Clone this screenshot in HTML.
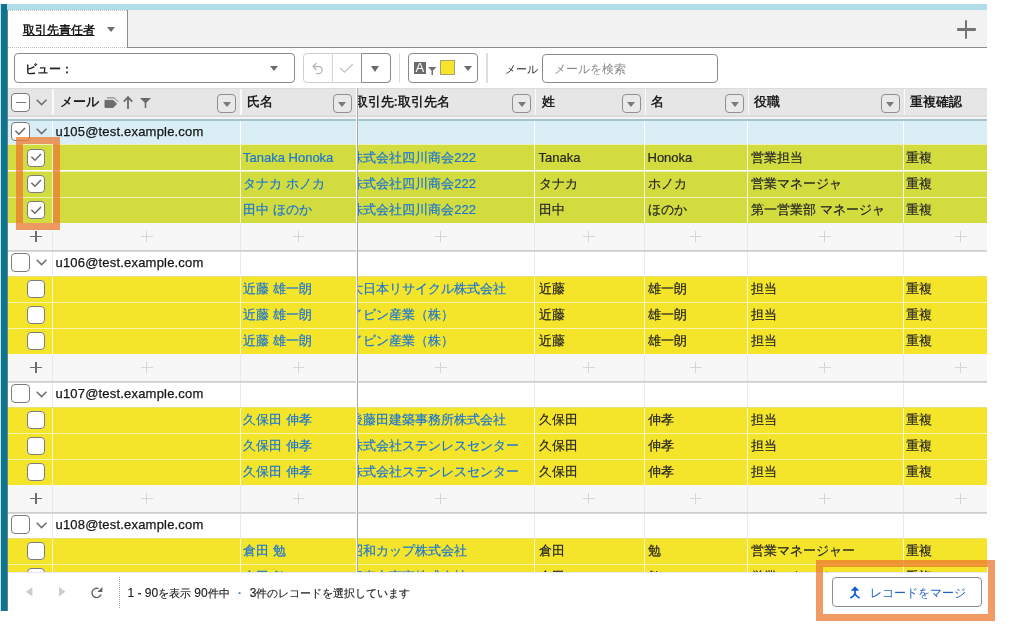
<!DOCTYPE html>
<html><head><meta charset="utf-8"><style>
*{box-sizing:border-box}
html,body{margin:0;padding:0}
body{width:1024px;height:637px;position:relative;overflow:hidden;background:#fff;will-change:transform;font-family:"Liberation Sans",sans-serif;color:#222}
.abs{position:absolute}
.teal{position:absolute;left:1px;top:4px;width:6px;height:607px;background:#0e7590}
.topbar{position:absolute;left:7px;top:4px;width:980px;height:6px;background:#b1dde9}
.tabbar{position:absolute;left:127px;top:10px;width:860px;height:38px;background:#f2f2f2;border-left:1px solid #8c8c8c;border-bottom:1.5px solid #8c8c8c}
.tab{position:absolute;left:8px;top:10px;width:119px;height:38px;background:#fff;border-top:1px dotted #c0c0c0;border-bottom:1px dotted #c0c0c0}
.tablabel{position:absolute;left:14.5px;top:12px;font-size:12px;font-weight:bold;text-decoration:underline;color:#1a1a1a;line-height:14px}
.tri{position:absolute;width:0;height:0;border-left:4px solid transparent;border-right:4px solid transparent;border-top:5px solid #6d6d6d}
.box{position:absolute;border:1px solid #8a8a8a;border-radius:4px;background:#fff}
.grid{position:absolute;left:8px;top:88px;width:979px;height:483.8px;overflow:hidden}
.gin{position:absolute;left:-8px;top:-88px;width:1024px;height:637px}
.hdr{position:absolute;left:8px;top:87.5px;width:979px;height:28px;background:#e6e6e6;border-top:1px solid #dcdcdc}
.htext{position:absolute;top:5.5px;font-size:13px;font-weight:bold;color:#1e1e1e;line-height:15px;white-space:nowrap}
.hsep{position:absolute;top:0;width:1.5px;height:28px;background:#fafafa}
.dd{position:absolute;top:5.5px;width:19px;height:19px;border:1.3px solid #8f8f8f;border-radius:4px;background:#e9e9e9}
.dd .tri{left:4.5px;top:6.5px;border-top-color:#7a7a7a}
.hl{position:absolute;left:8px;width:979px}
.vs{position:absolute;width:1px}
.c{position:absolute;font-size:13px;line-height:15px;white-space:nowrap;color:#262626;-webkit-text-stroke:0.2px currentColor}
.link{color:#1c76d4}
.c3{position:absolute;left:358px;width:176px;overflow:hidden}
.cb{position:absolute;width:19px;height:19px;border:1.2px solid #7d7d7d;border-radius:4px;background:#fff}
.cb svg{position:absolute;left:-1.2px;top:-1.2px}
.chev{position:absolute;width:12px;height:7px;line-height:0}
.gmail{position:absolute;left:55.5px;font-size:13px;letter-spacing:0.19px;line-height:15px;color:#161616;white-space:nowrap;-webkit-text-stroke:0.25px #161616}
.pl{position:absolute;width:11.5px;height:11.5px}
.pl:before{content:"";position:absolute;left:0;top:5px;width:11.5px;height:1.3px;background:#d6d6d6}
.pl:after{content:"";position:absolute;left:5px;top:0;width:1.3px;height:11.5px;background:#d6d6d6}
.pl.dark:before,.pl.dark:after{background:#6e6e6e}
.pl.dark:before{height:1.6px}
.pl.dark:after{width:1.6px}
.orange{position:absolute;border:7px solid rgba(236,122,48,.75)}
.foot{position:absolute;font-size:11px;color:#222;-webkit-text-stroke:0.15px #222;white-space:nowrap;line-height:13px}
</style></head><body>
<div class="teal"></div><div class="abs" style="left:0;top:4px;width:1px;height:607px;background:#c3e2ea"></div><div class="abs" style="left:7px;top:10px;width:1px;height:601px;background:#6b7f85"></div>
<div class="topbar"></div>
<div class="tabbar"></div>
<div class="tab"><div class="tablabel">取引先責任者</div><div class="tri" style="left:99px;top:16px"></div></div>
<div class="abs" style="left:956.5px;top:28.2px;width:19.5px;height:2.7px;background:#747474;border-radius:1px"></div>
<div class="abs" style="left:964.8px;top:20px;width:2.7px;height:19px;background:#747474;border-radius:1px"></div>

<div class="box" style="left:14px;top:53px;width:281px;height:30px"><div class="abs" style="left:9.5px;top:7.5px;font-size:12px;font-weight:bold;line-height:14px">ビュー：</div><div class="tri" style="left:255px;top:12px"></div></div>
<div class="box" style="left:303px;top:53px;width:88px;height:30px;border-color:#cfcfcf"></div>
<div class="abs" style="left:332px;top:53px;width:1px;height:30px;background:#d4d4d4"></div>
<div class="abs" style="left:361px;top:53px;width:30px;height:30px;border:1px solid #8a8a8a;border-radius:0 4px 4px 0"></div>
<div class="tri" style="left:370.8px;top:65.5px;border-left-width:4.7px;border-right-width:4.7px;border-top-width:6px;border-top-color:#6a6a6a"></div>
<svg class="abs" style="left:310px;top:61px" width="15" height="15" viewBox="0 0 15 15"><path d="M4 5.5 H8.5 A3.6 3.6 0 0 1 8.5 12.7 H6" fill="none" stroke="#b9b9b9" stroke-width="1.3"/><path d="M6.5 2 L3 5.5 L6.5 9" fill="none" stroke="#b9b9b9" stroke-width="1.3"/></svg>
<svg class="abs" style="left:339px;top:62px" width="15" height="12" viewBox="0 0 15 12"><path d="M1 6 L5.5 10.2 L13.7 2.3" fill="none" stroke="#c4c4c4" stroke-width="1.3"/></svg>
<div class="abs" style="left:398.5px;top:53px;width:1.5px;height:30px;background:#dedede"></div>
<div class="box" style="left:408px;top:53px;width:70px;height:30px"></div>
<div class="abs" style="left:413.5px;top:61.5px;width:12.5px;height:12px;background:#6b6b6b"></div>
<div class="abs" style="left:413.5px;top:60px;width:12.5px;font-size:13px;color:#fff;text-align:center;line-height:15px">A</div>
<svg class="abs" style="left:428px;top:67px" width="9" height="8" viewBox="0 0 9 8"><path d="M0 0 H8.5 L5 3.5 V8 H3.5 V3.5 Z" fill="#707070"/></svg>
<div class="abs" style="left:440px;top:60px;width:15px;height:15px;background:#f6e52c;border:1px solid #a8a070"></div>
<div class="tri" style="left:464px;top:65.5px"></div>
<div class="abs" style="left:486px;top:53px;width:1.5px;height:30px;background:#dedede"></div>
<div class="abs" style="left:504.5px;top:62px;font-size:11px;color:#333;line-height:14px">メール</div>
<div class="box" style="left:541.5px;top:53.5px;width:176px;height:29.5px"><div class="abs" style="left:11.5px;top:7px;font-size:12px;color:#8a8a8a;line-height:14px">メールを検索</div></div>

<div class="grid"><div class="gin">
<div class="hdr">
  <div class="cb" style="left:3.3px;top:4.3px;background:#fff"><div class="abs" style="left:3.5px;top:7.8px;width:10.3px;height:1.4px;background:#777"></div></div>
  <div class="chev" style="left:28px;top:10.5px"><svg width="12" height="7" viewBox="0 0 12 7"><path d="M0.7 0.7 L5.6 5.6 L10.5 0.7" fill="none" stroke="#6e6e6e" stroke-width="1.5"/></svg></div>
  <div class="hsep" style="left:44.3px"></div>
  <div class="htext" style="left:51.5px">メール</div>
  <svg class="abs" style="left:96px;top:8px" width="15" height="12" viewBox="0 0 15 12"><path d="M1 3.4 H9.2 L12.5 6.9 L9.2 10.4 H1 Z" fill="#6c6c6c" stroke="#6c6c6c" stroke-width="1" stroke-linejoin="round"/><path d="M3 0.9 H10.3 L14.3 5" fill="none" stroke="#777" stroke-width="1"/></svg>
  <svg class="abs" style="left:115px;top:7.5px" width="10" height="13" viewBox="0 0 10 13"><path d="M5 13 V1.5 M0.8 5.6 L5 1.2 L9.2 5.6" fill="none" stroke="#6a6a6a" stroke-width="1.8"/></svg>
  <svg class="abs" style="left:131.5px;top:9.5px" width="11" height="10" viewBox="0 0 11 10"><path d="M0 0 H11 L6.3 4.8 V10 H4.7 V4.8 Z" fill="#6a6a6a"/></svg>
  <div class="dd" style="left:209px"><div class="tri"></div></div>
  <div class="hsep" style="left:232px"></div>
  <div class="htext" style="left:239px">氏名</div>
  <div class="dd" style="left:324.5px"><div class="tri"></div></div>
  <div class="abs" style="left:350px;top:0;width:176px;height:28px;overflow:hidden"><div class="htext" style="left:-3.5px">取引先:取引先名</div></div>
  <div class="dd" style="left:504px"><div class="tri"></div></div>
  <div class="hsep" style="left:526.5px"></div>
  <div class="htext" style="left:533.5px">姓</div>
  <div class="dd" style="left:613.5px"><div class="tri"></div></div>
  <div class="hsep" style="left:636.5px"></div>
  <div class="htext" style="left:643px">名</div>
  <div class="dd" style="left:717px"><div class="tri"></div></div>
  <div class="hsep" style="left:739.5px"></div>
  <div class="htext" style="left:746px">役職</div>
  <div class="dd" style="left:872.5px"><div class="tri"></div></div>
  <div class="hsep" style="left:895.5px"></div>
  <div class="htext" style="left:902px">重複確認</div>
</div>
<div class="hl" style="top:115px;height:2px;background:#dcdcdc"></div>
<div class="hl" style="top:117px;height:2px;background:#f4f4f4"></div>
<div class="hl" style="top:118.80px;height:2px;background:#a5c4cd"></div>
<div class="hl" style="top:120.80px;height:23.60px;background:#d9eef5"></div>
<div class="vs" style="left:52px;top:120.80px;height:23.60px;background:#ffffff"></div>
<div class="vs" style="left:240px;top:120.80px;height:23.60px;background:#ffffff"></div>
<div class="vs" style="left:534px;top:120.80px;height:23.60px;background:#ffffff"></div>
<div class="vs" style="left:644px;top:120.80px;height:23.60px;background:#ffffff"></div>
<div class="vs" style="left:747px;top:120.80px;height:23.60px;background:#ffffff"></div>
<div class="vs" style="left:903px;top:120.80px;height:23.60px;background:#ffffff"></div>
<div class="cb" style="left:11.3px;top:122.10px"><svg width="19" height="19" viewBox="0 0 19 19"><path d="M4.4 8.8 L7.9 12.2 L14 6" fill="none" stroke="#686868" stroke-width="1.5"/></svg></div>
<div class="chev" style="left:36px;top:128.30px"><svg width="12" height="7" viewBox="0 0 12 7"><path d="M0.7 0.7 L5.6 5.6 L10.5 0.7" fill="none" stroke="#6e6e6e" stroke-width="1.5"/></svg></div>
<div class="gmail" style="top:124.00px">u105@test.example.com</div>
<div class="hl" style="top:144.40px;height:1px;background:#eef1b5"></div>
<div class="hl" style="top:145.40px;height:25.00px;background:#d3dc3e"></div>
<div class="vs" style="left:52px;top:145.40px;height:25.00px;background:rgba(255,255,255,.8)"></div>
<div class="vs" style="left:240px;top:145.40px;height:25.00px;background:rgba(255,255,255,.8)"></div>
<div class="vs" style="left:534px;top:145.40px;height:25.00px;background:rgba(255,255,255,.8)"></div>
<div class="vs" style="left:644px;top:145.40px;height:25.00px;background:rgba(255,255,255,.8)"></div>
<div class="vs" style="left:747px;top:145.40px;height:25.00px;background:rgba(255,255,255,.8)"></div>
<div class="vs" style="left:903px;top:145.40px;height:25.00px;background:rgba(255,255,255,.8)"></div>
<div class="cb" style="left:26.7px;top:148.50px;width:18px;height:18px"><svg width="19" height="19" viewBox="0 0 19 19"><path d="M4.4 8.8 L7.9 12.2 L14 6" fill="none" stroke="#686868" stroke-width="1.5"/></svg></div>
<div class="c link" style="left:243px;top:149.90px">Tanaka Honoka</div>
<div class="c3" style="top:145.40px;height:25.00px"><div class="c link" style="left:-7.7px;top:4.5px">株式会社四川商会222</div></div>
<div class="c" style="left:538.5px;top:149.90px">Tanaka</div>
<div class="c" style="left:647.5px;top:149.90px">Honoka</div>
<div class="c" style="left:751px;top:149.90px">営業担当</div>
<div class="c" style="left:906px;top:149.90px">重複</div>
<div class="hl" style="top:170.50px;height:1px;background:#eef1b5"></div>
<div class="hl" style="top:171.50px;height:25.00px;background:#d3dc3e"></div>
<div class="vs" style="left:52px;top:171.50px;height:25.00px;background:rgba(255,255,255,.8)"></div>
<div class="vs" style="left:240px;top:171.50px;height:25.00px;background:rgba(255,255,255,.8)"></div>
<div class="vs" style="left:534px;top:171.50px;height:25.00px;background:rgba(255,255,255,.8)"></div>
<div class="vs" style="left:644px;top:171.50px;height:25.00px;background:rgba(255,255,255,.8)"></div>
<div class="vs" style="left:747px;top:171.50px;height:25.00px;background:rgba(255,255,255,.8)"></div>
<div class="vs" style="left:903px;top:171.50px;height:25.00px;background:rgba(255,255,255,.8)"></div>
<div class="cb" style="left:26.7px;top:174.60px;width:18px;height:18px"><svg width="19" height="19" viewBox="0 0 19 19"><path d="M4.4 8.8 L7.9 12.2 L14 6" fill="none" stroke="#686868" stroke-width="1.5"/></svg></div>
<div class="c link" style="left:243px;top:176.00px">タナカ ホノカ</div>
<div class="c3" style="top:171.50px;height:25.00px"><div class="c link" style="left:-7.7px;top:4.5px">株式会社四川商会222</div></div>
<div class="c" style="left:538.5px;top:176.00px">タナカ</div>
<div class="c" style="left:647.5px;top:176.00px">ホノカ</div>
<div class="c" style="left:751px;top:176.00px">営業マネージャ</div>
<div class="c" style="left:906px;top:176.00px">重複</div>
<div class="hl" style="top:196.60px;height:1px;background:#eef1b5"></div>
<div class="hl" style="top:197.60px;height:25.00px;background:#d3dc3e"></div>
<div class="vs" style="left:52px;top:197.60px;height:25.00px;background:rgba(255,255,255,.8)"></div>
<div class="vs" style="left:240px;top:197.60px;height:25.00px;background:rgba(255,255,255,.8)"></div>
<div class="vs" style="left:534px;top:197.60px;height:25.00px;background:rgba(255,255,255,.8)"></div>
<div class="vs" style="left:644px;top:197.60px;height:25.00px;background:rgba(255,255,255,.8)"></div>
<div class="vs" style="left:747px;top:197.60px;height:25.00px;background:rgba(255,255,255,.8)"></div>
<div class="vs" style="left:903px;top:197.60px;height:25.00px;background:rgba(255,255,255,.8)"></div>
<div class="cb" style="left:26.7px;top:200.70px;width:18px;height:18px"><svg width="19" height="19" viewBox="0 0 19 19"><path d="M4.4 8.8 L7.9 12.2 L14 6" fill="none" stroke="#686868" stroke-width="1.5"/></svg></div>
<div class="c link" style="left:243px;top:202.10px">田中 ほのか</div>
<div class="c3" style="top:197.60px;height:25.00px"><div class="c link" style="left:-7.7px;top:4.5px">株式会社四川商会222</div></div>
<div class="c" style="left:538.5px;top:202.10px">田中</div>
<div class="c" style="left:647.5px;top:202.10px">ほのか</div>
<div class="c" style="left:751px;top:202.10px">第一営業部 マネージャ</div>
<div class="c" style="left:906px;top:202.10px">重複</div>
<div class="hl" style="top:222.70px;height:27.20px;background:#f7f7f7"></div>
<div class="vs" style="left:52px;top:222.70px;height:27.20px;background:#e9e9e9"></div>
<div class="vs" style="left:240px;top:222.70px;height:27.20px;background:#e9e9e9"></div>
<div class="vs" style="left:534px;top:222.70px;height:27.20px;background:#e9e9e9"></div>
<div class="vs" style="left:644px;top:222.70px;height:27.20px;background:#e9e9e9"></div>
<div class="vs" style="left:747px;top:222.70px;height:27.20px;background:#e9e9e9"></div>
<div class="vs" style="left:903px;top:222.70px;height:27.20px;background:#e9e9e9"></div>
<div class="pl dark" style="left:30.2px;top:230.70px"></div>
<div class="pl" style="left:141px;top:230.70px"></div>
<div class="pl" style="left:292.5px;top:230.70px"></div>
<div class="pl" style="left:435px;top:230.70px"></div>
<div class="pl" style="left:583px;top:230.70px"></div>
<div class="pl" style="left:690px;top:230.70px"></div>
<div class="pl" style="left:819px;top:230.70px"></div>
<div class="pl" style="left:955px;top:230.70px"></div>
<div class="hl" style="top:249.90px;height:2px;background:linear-gradient(#c9c9c9,#dedede)"></div>
<div class="hl" style="top:251.90px;height:23.60px;background:#ffffff"></div>
<div class="vs" style="left:52px;top:251.90px;height:23.60px;background:#ebebeb"></div>
<div class="vs" style="left:240px;top:251.90px;height:23.60px;background:#ebebeb"></div>
<div class="vs" style="left:534px;top:251.90px;height:23.60px;background:#ebebeb"></div>
<div class="vs" style="left:644px;top:251.90px;height:23.60px;background:#ebebeb"></div>
<div class="vs" style="left:747px;top:251.90px;height:23.60px;background:#ebebeb"></div>
<div class="vs" style="left:903px;top:251.90px;height:23.60px;background:#ebebeb"></div>
<div class="cb" style="left:11.3px;top:253.20px"></div>
<div class="chev" style="left:36px;top:259.40px"><svg width="12" height="7" viewBox="0 0 12 7"><path d="M0.7 0.7 L5.6 5.6 L10.5 0.7" fill="none" stroke="#6e6e6e" stroke-width="1.5"/></svg></div>
<div class="gmail" style="top:255.10px">u106@test.example.com</div>
<div class="hl" style="top:275.50px;height:1px;background:#e8e07a"></div>
<div class="hl" style="top:276.50px;height:25.00px;background:#f5e52a"></div>
<div class="vs" style="left:52px;top:276.50px;height:25.00px;background:rgba(255,255,255,.8)"></div>
<div class="vs" style="left:240px;top:276.50px;height:25.00px;background:rgba(255,255,255,.8)"></div>
<div class="vs" style="left:534px;top:276.50px;height:25.00px;background:rgba(255,255,255,.8)"></div>
<div class="vs" style="left:644px;top:276.50px;height:25.00px;background:rgba(255,255,255,.8)"></div>
<div class="vs" style="left:747px;top:276.50px;height:25.00px;background:rgba(255,255,255,.8)"></div>
<div class="vs" style="left:903px;top:276.50px;height:25.00px;background:rgba(255,255,255,.8)"></div>
<div class="cb" style="left:26.7px;top:279.60px;width:18px;height:18px"></div>
<div class="c link" style="left:243px;top:281.00px">近藤 雄一朗</div>
<div class="c3" style="top:276.50px;height:25.00px"><div class="c link" style="left:-7.7px;top:4.5px">大日本リサイクル株式会社</div></div>
<div class="c" style="left:538.5px;top:281.00px">近藤</div>
<div class="c" style="left:647.5px;top:281.00px">雄一朗</div>
<div class="c" style="left:751px;top:281.00px">担当</div>
<div class="c" style="left:906px;top:281.00px">重複</div>
<div class="hl" style="top:301.60px;height:1px;background:#fbf3b0"></div>
<div class="hl" style="top:302.60px;height:25.00px;background:#f5e52a"></div>
<div class="vs" style="left:52px;top:302.60px;height:25.00px;background:rgba(255,255,255,.8)"></div>
<div class="vs" style="left:240px;top:302.60px;height:25.00px;background:rgba(255,255,255,.8)"></div>
<div class="vs" style="left:534px;top:302.60px;height:25.00px;background:rgba(255,255,255,.8)"></div>
<div class="vs" style="left:644px;top:302.60px;height:25.00px;background:rgba(255,255,255,.8)"></div>
<div class="vs" style="left:747px;top:302.60px;height:25.00px;background:rgba(255,255,255,.8)"></div>
<div class="vs" style="left:903px;top:302.60px;height:25.00px;background:rgba(255,255,255,.8)"></div>
<div class="cb" style="left:26.7px;top:305.70px;width:18px;height:18px"></div>
<div class="c link" style="left:243px;top:307.10px">近藤 雄一朗</div>
<div class="c3" style="top:302.60px;height:25.00px"><div class="c link" style="left:-7.7px;top:4.5px">イビン産業（株）</div></div>
<div class="c" style="left:538.5px;top:307.10px">近藤</div>
<div class="c" style="left:647.5px;top:307.10px">雄一朗</div>
<div class="c" style="left:751px;top:307.10px">担当</div>
<div class="c" style="left:906px;top:307.10px">重複</div>
<div class="hl" style="top:327.70px;height:1px;background:#fbf3b0"></div>
<div class="hl" style="top:328.70px;height:25.00px;background:#f5e52a"></div>
<div class="vs" style="left:52px;top:328.70px;height:25.00px;background:rgba(255,255,255,.8)"></div>
<div class="vs" style="left:240px;top:328.70px;height:25.00px;background:rgba(255,255,255,.8)"></div>
<div class="vs" style="left:534px;top:328.70px;height:25.00px;background:rgba(255,255,255,.8)"></div>
<div class="vs" style="left:644px;top:328.70px;height:25.00px;background:rgba(255,255,255,.8)"></div>
<div class="vs" style="left:747px;top:328.70px;height:25.00px;background:rgba(255,255,255,.8)"></div>
<div class="vs" style="left:903px;top:328.70px;height:25.00px;background:rgba(255,255,255,.8)"></div>
<div class="cb" style="left:26.7px;top:331.80px;width:18px;height:18px"></div>
<div class="c link" style="left:243px;top:333.20px">近藤 雄一朗</div>
<div class="c3" style="top:328.70px;height:25.00px"><div class="c link" style="left:-7.7px;top:4.5px">イビン産業（株）</div></div>
<div class="c" style="left:538.5px;top:333.20px">近藤</div>
<div class="c" style="left:647.5px;top:333.20px">雄一朗</div>
<div class="c" style="left:751px;top:333.20px">担当</div>
<div class="c" style="left:906px;top:333.20px">重複</div>
<div class="hl" style="top:353.80px;height:27.20px;background:#f7f7f7"></div>
<div class="vs" style="left:52px;top:353.80px;height:27.20px;background:#e9e9e9"></div>
<div class="vs" style="left:240px;top:353.80px;height:27.20px;background:#e9e9e9"></div>
<div class="vs" style="left:534px;top:353.80px;height:27.20px;background:#e9e9e9"></div>
<div class="vs" style="left:644px;top:353.80px;height:27.20px;background:#e9e9e9"></div>
<div class="vs" style="left:747px;top:353.80px;height:27.20px;background:#e9e9e9"></div>
<div class="vs" style="left:903px;top:353.80px;height:27.20px;background:#e9e9e9"></div>
<div class="pl dark" style="left:30.2px;top:361.80px"></div>
<div class="pl" style="left:141px;top:361.80px"></div>
<div class="pl" style="left:292.5px;top:361.80px"></div>
<div class="pl" style="left:435px;top:361.80px"></div>
<div class="pl" style="left:583px;top:361.80px"></div>
<div class="pl" style="left:690px;top:361.80px"></div>
<div class="pl" style="left:819px;top:361.80px"></div>
<div class="pl" style="left:955px;top:361.80px"></div>
<div class="hl" style="top:381.00px;height:2px;background:linear-gradient(#c9c9c9,#dedede)"></div>
<div class="hl" style="top:383.00px;height:23.60px;background:#ffffff"></div>
<div class="vs" style="left:52px;top:383.00px;height:23.60px;background:#ebebeb"></div>
<div class="vs" style="left:240px;top:383.00px;height:23.60px;background:#ebebeb"></div>
<div class="vs" style="left:534px;top:383.00px;height:23.60px;background:#ebebeb"></div>
<div class="vs" style="left:644px;top:383.00px;height:23.60px;background:#ebebeb"></div>
<div class="vs" style="left:747px;top:383.00px;height:23.60px;background:#ebebeb"></div>
<div class="vs" style="left:903px;top:383.00px;height:23.60px;background:#ebebeb"></div>
<div class="cb" style="left:11.3px;top:384.30px"></div>
<div class="chev" style="left:36px;top:390.50px"><svg width="12" height="7" viewBox="0 0 12 7"><path d="M0.7 0.7 L5.6 5.6 L10.5 0.7" fill="none" stroke="#6e6e6e" stroke-width="1.5"/></svg></div>
<div class="gmail" style="top:386.20px">u107@test.example.com</div>
<div class="hl" style="top:406.60px;height:1px;background:#e8e07a"></div>
<div class="hl" style="top:407.60px;height:25.00px;background:#f5e52a"></div>
<div class="vs" style="left:52px;top:407.60px;height:25.00px;background:rgba(255,255,255,.8)"></div>
<div class="vs" style="left:240px;top:407.60px;height:25.00px;background:rgba(255,255,255,.8)"></div>
<div class="vs" style="left:534px;top:407.60px;height:25.00px;background:rgba(255,255,255,.8)"></div>
<div class="vs" style="left:644px;top:407.60px;height:25.00px;background:rgba(255,255,255,.8)"></div>
<div class="vs" style="left:747px;top:407.60px;height:25.00px;background:rgba(255,255,255,.8)"></div>
<div class="vs" style="left:903px;top:407.60px;height:25.00px;background:rgba(255,255,255,.8)"></div>
<div class="cb" style="left:26.7px;top:410.70px;width:18px;height:18px"></div>
<div class="c link" style="left:243px;top:412.10px">久保田 伸孝</div>
<div class="c3" style="top:407.60px;height:25.00px"><div class="c link" style="left:-7.7px;top:4.5px">後藤田建築事務所株式会社</div></div>
<div class="c" style="left:538.5px;top:412.10px">久保田</div>
<div class="c" style="left:647.5px;top:412.10px">伸孝</div>
<div class="c" style="left:751px;top:412.10px">担当</div>
<div class="c" style="left:906px;top:412.10px">重複</div>
<div class="hl" style="top:432.70px;height:1px;background:#fbf3b0"></div>
<div class="hl" style="top:433.70px;height:25.00px;background:#f5e52a"></div>
<div class="vs" style="left:52px;top:433.70px;height:25.00px;background:rgba(255,255,255,.8)"></div>
<div class="vs" style="left:240px;top:433.70px;height:25.00px;background:rgba(255,255,255,.8)"></div>
<div class="vs" style="left:534px;top:433.70px;height:25.00px;background:rgba(255,255,255,.8)"></div>
<div class="vs" style="left:644px;top:433.70px;height:25.00px;background:rgba(255,255,255,.8)"></div>
<div class="vs" style="left:747px;top:433.70px;height:25.00px;background:rgba(255,255,255,.8)"></div>
<div class="vs" style="left:903px;top:433.70px;height:25.00px;background:rgba(255,255,255,.8)"></div>
<div class="cb" style="left:26.7px;top:436.80px;width:18px;height:18px"></div>
<div class="c link" style="left:243px;top:438.20px">久保田 伸孝</div>
<div class="c3" style="top:433.70px;height:25.00px"><div class="c link" style="left:-7.7px;top:4.5px">株式会社ステンレスセンター</div></div>
<div class="c" style="left:538.5px;top:438.20px">久保田</div>
<div class="c" style="left:647.5px;top:438.20px">伸孝</div>
<div class="c" style="left:751px;top:438.20px">担当</div>
<div class="c" style="left:906px;top:438.20px">重複</div>
<div class="hl" style="top:458.80px;height:1px;background:#fbf3b0"></div>
<div class="hl" style="top:459.80px;height:25.00px;background:#f5e52a"></div>
<div class="vs" style="left:52px;top:459.80px;height:25.00px;background:rgba(255,255,255,.8)"></div>
<div class="vs" style="left:240px;top:459.80px;height:25.00px;background:rgba(255,255,255,.8)"></div>
<div class="vs" style="left:534px;top:459.80px;height:25.00px;background:rgba(255,255,255,.8)"></div>
<div class="vs" style="left:644px;top:459.80px;height:25.00px;background:rgba(255,255,255,.8)"></div>
<div class="vs" style="left:747px;top:459.80px;height:25.00px;background:rgba(255,255,255,.8)"></div>
<div class="vs" style="left:903px;top:459.80px;height:25.00px;background:rgba(255,255,255,.8)"></div>
<div class="cb" style="left:26.7px;top:462.90px;width:18px;height:18px"></div>
<div class="c link" style="left:243px;top:464.30px">久保田 伸孝</div>
<div class="c3" style="top:459.80px;height:25.00px"><div class="c link" style="left:-7.7px;top:4.5px">株式会社ステンレスセンター</div></div>
<div class="c" style="left:538.5px;top:464.30px">久保田</div>
<div class="c" style="left:647.5px;top:464.30px">伸孝</div>
<div class="c" style="left:751px;top:464.30px">担当</div>
<div class="c" style="left:906px;top:464.30px">重複</div>
<div class="hl" style="top:484.90px;height:27.20px;background:#f7f7f7"></div>
<div class="vs" style="left:52px;top:484.90px;height:27.20px;background:#e9e9e9"></div>
<div class="vs" style="left:240px;top:484.90px;height:27.20px;background:#e9e9e9"></div>
<div class="vs" style="left:534px;top:484.90px;height:27.20px;background:#e9e9e9"></div>
<div class="vs" style="left:644px;top:484.90px;height:27.20px;background:#e9e9e9"></div>
<div class="vs" style="left:747px;top:484.90px;height:27.20px;background:#e9e9e9"></div>
<div class="vs" style="left:903px;top:484.90px;height:27.20px;background:#e9e9e9"></div>
<div class="pl dark" style="left:30.2px;top:492.90px"></div>
<div class="pl" style="left:141px;top:492.90px"></div>
<div class="pl" style="left:292.5px;top:492.90px"></div>
<div class="pl" style="left:435px;top:492.90px"></div>
<div class="pl" style="left:583px;top:492.90px"></div>
<div class="pl" style="left:690px;top:492.90px"></div>
<div class="pl" style="left:819px;top:492.90px"></div>
<div class="pl" style="left:955px;top:492.90px"></div>
<div class="hl" style="top:512.10px;height:2px;background:linear-gradient(#c9c9c9,#dedede)"></div>
<div class="hl" style="top:514.10px;height:23.60px;background:#ffffff"></div>
<div class="vs" style="left:52px;top:514.10px;height:23.60px;background:#ebebeb"></div>
<div class="vs" style="left:240px;top:514.10px;height:23.60px;background:#ebebeb"></div>
<div class="vs" style="left:534px;top:514.10px;height:23.60px;background:#ebebeb"></div>
<div class="vs" style="left:644px;top:514.10px;height:23.60px;background:#ebebeb"></div>
<div class="vs" style="left:747px;top:514.10px;height:23.60px;background:#ebebeb"></div>
<div class="vs" style="left:903px;top:514.10px;height:23.60px;background:#ebebeb"></div>
<div class="cb" style="left:11.3px;top:515.40px"></div>
<div class="chev" style="left:36px;top:521.60px"><svg width="12" height="7" viewBox="0 0 12 7"><path d="M0.7 0.7 L5.6 5.6 L10.5 0.7" fill="none" stroke="#6e6e6e" stroke-width="1.5"/></svg></div>
<div class="gmail" style="top:517.30px">u108@test.example.com</div>
<div class="hl" style="top:537.70px;height:1px;background:#e8e07a"></div>
<div class="hl" style="top:538.70px;height:25.00px;background:#f5e52a"></div>
<div class="vs" style="left:52px;top:538.70px;height:25.00px;background:rgba(255,255,255,.8)"></div>
<div class="vs" style="left:240px;top:538.70px;height:25.00px;background:rgba(255,255,255,.8)"></div>
<div class="vs" style="left:534px;top:538.70px;height:25.00px;background:rgba(255,255,255,.8)"></div>
<div class="vs" style="left:644px;top:538.70px;height:25.00px;background:rgba(255,255,255,.8)"></div>
<div class="vs" style="left:747px;top:538.70px;height:25.00px;background:rgba(255,255,255,.8)"></div>
<div class="vs" style="left:903px;top:538.70px;height:25.00px;background:rgba(255,255,255,.8)"></div>
<div class="cb" style="left:26.7px;top:541.80px;width:18px;height:18px"></div>
<div class="c link" style="left:243px;top:543.20px">倉田 勉</div>
<div class="c3" style="top:538.70px;height:25.00px"><div class="c link" style="left:-7.7px;top:4.5px">昭和カップ株式会社</div></div>
<div class="c" style="left:538.5px;top:543.20px">倉田</div>
<div class="c" style="left:647.5px;top:543.20px">勉</div>
<div class="c" style="left:751px;top:543.20px">営業マネージャー</div>
<div class="c" style="left:906px;top:543.20px">重複</div>
<div class="hl" style="top:563.80px;height:1px;background:#fbf3b0"></div>
<div class="hl" style="top:564.80px;height:25.00px;background:#f5e52a"></div>
<div class="vs" style="left:52px;top:564.80px;height:25.00px;background:rgba(255,255,255,.8)"></div>
<div class="vs" style="left:240px;top:564.80px;height:25.00px;background:rgba(255,255,255,.8)"></div>
<div class="vs" style="left:534px;top:564.80px;height:25.00px;background:rgba(255,255,255,.8)"></div>
<div class="vs" style="left:644px;top:564.80px;height:25.00px;background:rgba(255,255,255,.8)"></div>
<div class="vs" style="left:747px;top:564.80px;height:25.00px;background:rgba(255,255,255,.8)"></div>
<div class="vs" style="left:903px;top:564.80px;height:25.00px;background:rgba(255,255,255,.8)"></div>
<div class="cb" style="left:26.7px;top:567.90px;width:18px;height:18px"></div>
<div class="c link" style="left:243px;top:569.30px">倉田 勉</div>
<div class="c3" style="top:564.80px;height:25.00px"><div class="c link" style="left:-7.7px;top:4.5px">三東京商事株式会社</div></div>
<div class="c" style="left:538.5px;top:569.30px">倉田</div>
<div class="c" style="left:647.5px;top:569.30px">勉</div>
<div class="c" style="left:751px;top:569.30px">営業マネージャー</div>
<div class="c" style="left:906px;top:569.30px">重複</div>
<div class="hl" style="top:589.90px;height:1px;background:#fbf3b0"></div>
<div class="hl" style="top:590.90px;height:25.00px;background:#f5e52a"></div>
<div class="vs" style="left:52px;top:590.90px;height:25.00px;background:rgba(255,255,255,.8)"></div>
<div class="vs" style="left:240px;top:590.90px;height:25.00px;background:rgba(255,255,255,.8)"></div>
<div class="vs" style="left:534px;top:590.90px;height:25.00px;background:rgba(255,255,255,.8)"></div>
<div class="vs" style="left:644px;top:590.90px;height:25.00px;background:rgba(255,255,255,.8)"></div>
<div class="vs" style="left:747px;top:590.90px;height:25.00px;background:rgba(255,255,255,.8)"></div>
<div class="vs" style="left:903px;top:590.90px;height:25.00px;background:rgba(255,255,255,.8)"></div>
<div class="cb" style="left:26.7px;top:594.00px;width:18px;height:18px"></div>
<div class="c link" style="left:243px;top:595.40px">倉田 勉</div>
<div class="c3" style="top:590.90px;height:25.00px"><div class="c link" style="left:-7.7px;top:4.5px">三東京商事株式会社</div></div>
<div class="c" style="left:538.5px;top:595.40px">倉田</div>
<div class="c" style="left:647.5px;top:595.40px">勉</div>
<div class="c" style="left:751px;top:595.40px">営業マネージャー</div>
<div class="c" style="left:906px;top:595.40px">重複</div>
<div class="hl" style="top:616.00px;height:27.20px;background:#f7f7f7"></div>
<div class="vs" style="left:52px;top:616.00px;height:27.20px;background:#e9e9e9"></div>
<div class="vs" style="left:240px;top:616.00px;height:27.20px;background:#e9e9e9"></div>
<div class="vs" style="left:534px;top:616.00px;height:27.20px;background:#e9e9e9"></div>
<div class="vs" style="left:644px;top:616.00px;height:27.20px;background:#e9e9e9"></div>
<div class="vs" style="left:747px;top:616.00px;height:27.20px;background:#e9e9e9"></div>
<div class="vs" style="left:903px;top:616.00px;height:27.20px;background:#e9e9e9"></div>
<div class="pl dark" style="left:30.2px;top:624.00px"></div>
<div class="pl" style="left:141px;top:624.00px"></div>
<div class="pl" style="left:292.5px;top:624.00px"></div>
<div class="pl" style="left:435px;top:624.00px"></div>
<div class="pl" style="left:583px;top:624.00px"></div>
<div class="pl" style="left:690px;top:624.00px"></div>
<div class="pl" style="left:819px;top:624.00px"></div>
<div class="pl" style="left:955px;top:624.00px"></div>

<div class="abs" style="left:356px;top:88px;width:1px;height:490px;background:#fff"></div>
<div class="abs" style="left:357px;top:88px;width:1.3px;height:490px;background:#a9a9a9"></div>
</div></div>
<div class="abs" style="left:8px;top:572px;width:979px;height:1px;background:#e6e8f5"></div>

<svg class="abs" style="left:25.5px;top:587.3px" width="7" height="10" viewBox="0 0 7 10"><path d="M6.4 0 V9.6 L0 4.8 Z" fill="#cccccc"/></svg>
<svg class="abs" style="left:59.3px;top:587.3px" width="7" height="10" viewBox="0 0 7 10"><path d="M0 0 V9.6 L6.4 4.8 Z" fill="#cccccc"/></svg>
<svg class="abs" style="left:89px;top:585px" width="15" height="15" viewBox="0 0 15 15"><path d="M12.1 9.6 A4.7 4.7 0 1 1 9.6 3.6" fill="none" stroke="#626262" stroke-width="1.4"/><path d="M13.4 1.9 V7 H8.3 Z" fill="#626262"/></svg>
<div class="abs" style="left:119px;top:577px;width:0;height:31px;border-left:1px dotted #aaa"></div>
<div class="foot" style="left:127.5px;top:586.5px"><span style="font-size:12px">1 - 90</span>を表示 <span style="font-size:12px">90</span>件中 <span style="color:#1a6fd0;margin:0 1.5px">・</span> <span style="font-size:12px">3</span>件のレコードを選択しています</div>

<div class="box" style="left:832px;top:577px;width:150px;height:30px;border-color:#8d8d8d"></div>
<svg class="abs" style="left:849px;top:585px" width="12" height="14" viewBox="0 0 12 14"><path d="M6 1.2 L10.2 5.8 H1.8 Z" fill="#0b5cd5"/><path d="M6 5 V8.3 Q5.6 10.6 1.8 12.7 M6 8.3 Q6.4 10.6 10 12.7" fill="none" stroke="#0b5cd5" stroke-width="1.7" stroke-linecap="round"/></svg>
<div class="abs" style="left:870px;top:586px;font-size:12px;color:#1f63cc;line-height:14px">レコードをマージ</div>

<div class="orange" style="left:16px;top:136.6px;width:43.5px;height:93px"></div>
<div class="orange" style="left:816px;top:560px;width:179px;height:61px"></div>
</body></html>
